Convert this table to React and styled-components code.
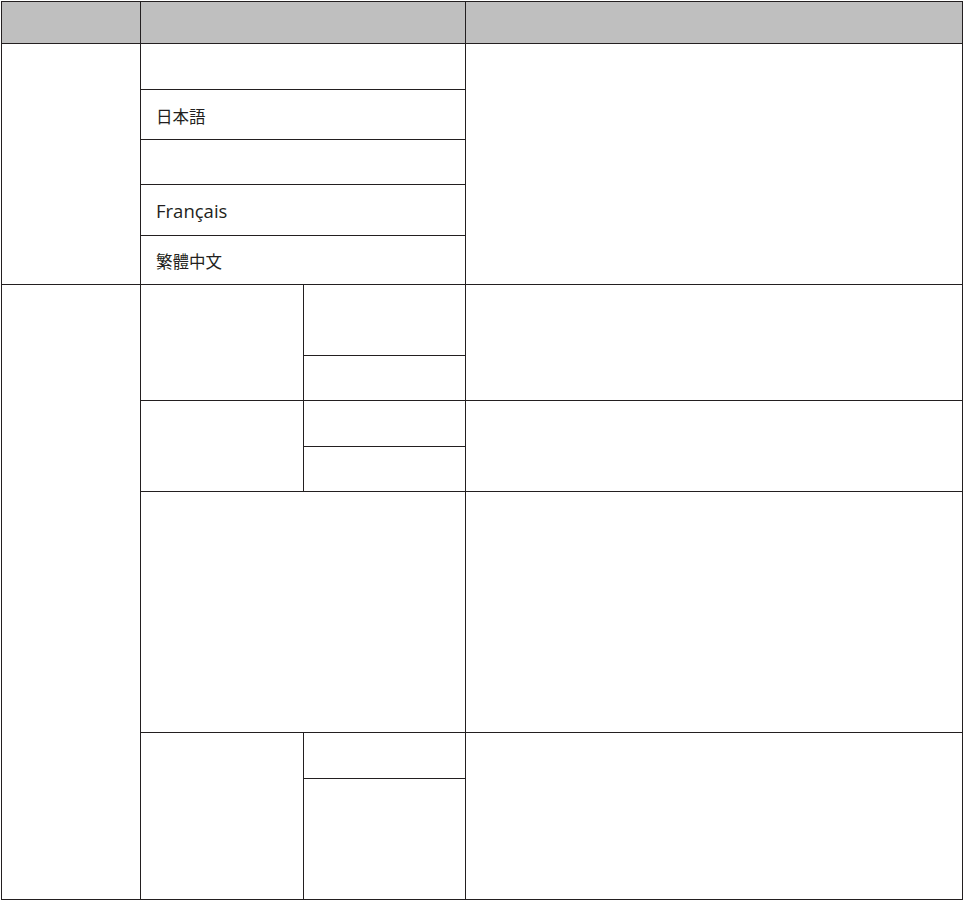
import React from 'react'
import styled, { createGlobalStyle } from 'styled-components'

const GlobalStyle = createGlobalStyle`
  body {
    margin: 0;
    background: #ffffff;
    font-family: "Open Sans", "Noto Sans CJK JP", sans-serif;
    color: #231f20;
  }
  #root {
    padding: 1px 0 0 1px;
  }
`

const Grid = styled.div`
  display: grid;
  width: 962px;
  box-sizing: border-box;
  padding: 1px;
  gap: 1px;
  background: #231f20;
  grid-template-columns: 138px 162px 161px 496px;
  grid-template-rows: 41px 45px 49px 44px 50px 48px 70px 44px 45px 44px 240px 45px 120px;
`

const Cell = styled.div`
  background: ${p => (p.$head ? '#bfbfbf' : '#ffffff')};
  grid-column: ${p => p.$col || 'auto'};
  grid-row: ${p => p.$row || 'auto'};
  display: flex;
  align-items: center;
  padding: 3px 15px 0;
  min-width: 0;
`

const Label = styled.span`
  font-family: ${p =>
    p.$latin
      ? '"Open Sans", sans-serif'
      : '"Noto Sans CJK JP", "Noto Sans CJK TC", sans-serif'};
  font-size: ${p => (p.$latin ? '18.5px' : '16.5px')};
  line-height: 1;
  white-space: nowrap;
`

const languages = [
  { row: 2, text: '' },
  { row: 3, text: '日本語' },
  { row: 4, text: '' },
  { row: 5, text: 'Français', latin: true },
  { row: 6, text: '繁體中文' },
]

const groups = [
  { rows: '7 / 9', subs: [7, 8] },
  { rows: '9 / 11', subs: [9, 10] },
  { rows: '11 / 12', subs: [] },
  { rows: '12 / 14', subs: [12, 13] },
]

const App = () => (
  <>
    <GlobalStyle />
    <Grid>
      <Cell $head $col="1" $row="1" />
      <Cell $head $col="2 / 4" $row="1" />
      <Cell $head $col="4" $row="1" />

      <Cell $col="1" $row="2 / 7" />
      {languages.map(l => (
        <Cell key={l.row} $col="2 / 4" $row={String(l.row)}>
          {l.text && <Label $latin={l.latin}>{l.text}</Label>}
        </Cell>
      ))}
      <Cell $col="4" $row="2 / 7" />

      <Cell $col="1" $row="7 / 14" />
      {groups.map(g => (
        <React.Fragment key={g.rows}>
          <Cell $col={g.subs.length ? '2' : '2 / 4'} $row={g.rows} />
          {g.subs.map(r => (
            <Cell key={r} $col="3" $row={String(r)} />
          ))}
          <Cell $col="4" $row={g.rows} />
        </React.Fragment>
      ))}
    </Grid>
  </>
)

export default App
